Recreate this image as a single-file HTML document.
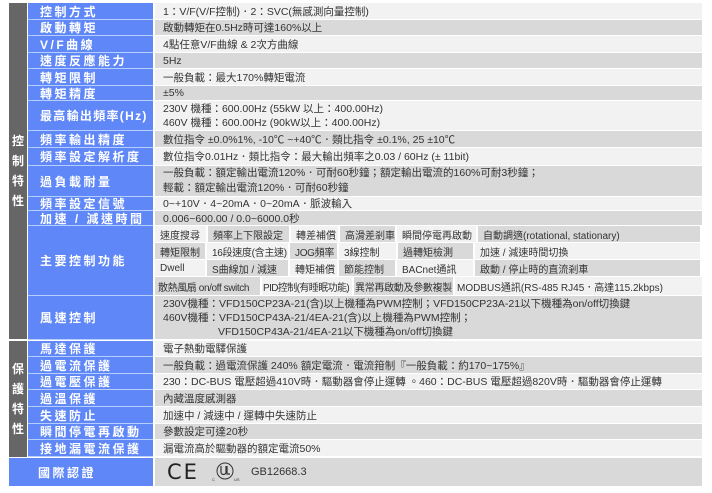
<!DOCTYPE html>
<html><head><meta charset="utf-8"><style>
*{margin:0;padding:0;box-sizing:border-box}
body{width:712px;height:493px;background:#fff;position:relative;overflow:hidden;font-family:"Liberation Sans","Noto Sans CJK TC",sans-serif}
.g{position:absolute;left:9px;width:18px;background:#666;color:#fff;font-size:12px;font-weight:bold;text-align:center;display:flex;flex-direction:column;justify-content:center;line-height:20px}
.l{position:absolute;left:28px;width:125px;background:#5f87f7;color:#fff;font-size:12px;font-weight:bold;letter-spacing:2.5px;padding-left:12px;display:flex;align-items:center;border-bottom:1px solid #b5cffa;white-space:nowrap}
.v,.c{position:absolute;font-size:10.5px;color:#333;display:flex;align-items:center;white-space:nowrap;border-bottom:1px solid #fff;overflow:hidden}
.v{left:155px;width:547px;padding-left:8px}
.c{padding-left:5px;border-right:2px solid #fff;font-size:10px}
.L{background:#f2f2f2}.D{background:#d9d9d9}
.m{flex-direction:column;align-items:flex-start;justify-content:center;line-height:14px}
</style></head><body>
<div class="g" style="top:3px;height:336px">控<br>制<br>特<br>性</div>
<div class="g" style="top:341px;height:116px">保<br>護<br>特<br>性</div>

<div class="l" style="top:3px;height:17px">控制方式</div><div class="v L" style="top:3px;height:17px">1：V/F(V/F控制)．2：SVC(無感測向量控制)</div>
<div class="l" style="top:20px;height:16px">啟動轉矩</div><div class="v D" style="top:20px;height:16px">啟動轉矩在0.5Hz時可達160%以上</div>
<div class="l" style="top:36px;height:17px">V/F曲線</div><div class="v L" style="top:36px;height:17px">4點任意V/F曲線 &amp; 2次方曲線</div>
<div class="l" style="top:53px;height:16px">速度反應能力</div><div class="v D" style="top:53px;height:16px">5Hz</div>
<div class="l" style="top:69px;height:17px">轉矩限制</div><div class="v L" style="top:69px;height:17px">一般負載：最大170%轉矩電流</div>
<div class="l" style="top:86px;height:15px">轉矩精度</div><div class="v D" style="top:86px;height:15px">±5%</div>
<div class="l" style="top:101px;height:30px;letter-spacing:1.3px">最高輸出頻率(Hz)</div><div class="v L m" style="top:101px;height:30px"><div>230V 機種：600.00Hz (55kW 以上：400.00Hz)</div><div>460V 機種：600.00Hz (90kW以上：400.00Hz)</div></div>
<div class="l" style="top:131px;height:17px">頻率輸出精度</div><div class="v D" style="top:131px;height:17px">數位指令 ±0.0%1%, -10℃ ~+40℃．類比指令 ±0.1%, 25 ±10℃</div>
<div class="l" style="top:148px;height:18px">頻率設定解析度</div><div class="v L" style="top:148px;height:18px">數位指令0.01Hz．類比指令：最大輸出頻率之0.03 / 60Hz (± 11bit)</div>
<div class="l" style="top:166px;height:31px">過負載耐量</div><div class="v D m" style="top:166px;height:31px;line-height:15px"><div>一般負載：額定輸出電流120%．可耐60秒鐘；額定輸出電流的160%可耐3秒鐘；</div><div>輕載：額定輸出電流120%．可耐60秒鐘</div></div>
<div class="l" style="top:197px;height:14px">頻率設定信號</div><div class="v L" style="top:197px;height:14px">0~+10V．4~20mA．0~20mA．脈波輸入</div>
<div class="l" style="top:211px;height:15px">加速 / 減速時間</div><div class="v D" style="top:211px;height:15px">0.006~600.00 / 0.0~6000.0秒</div>
<div class="l" style="top:226px;height:70px">主要控制功能</div>

<div class="c L" style="top:226px;left:155px;width:53px;height:17px">速度搜尋</div>
<div class="c D" style="top:226px;left:208px;width:83px;height:17px">頻率上下限設定</div>
<div class="c L" style="top:226px;left:291px;width:49px;height:17px">轉差補償</div>
<div class="c D" style="top:226px;left:340px;width:57px;height:17px">高滑差剎車</div>
<div class="c L" style="top:226px;left:397px;width:81px;height:17px">瞬間停電再啟動</div>
<div class="c D" style="top:226px;left:478px;width:224px;height:17px">自動調適(rotational, stationary)</div>

<div class="c D" style="top:243px;left:155px;width:52px;height:17px">轉矩限制</div>
<div class="c L" style="top:243px;left:207px;width:83px;height:17px;letter-spacing:-0.3px">16段速度(含主速)</div>
<div class="c D" style="top:243px;left:290px;width:49px;height:17px;letter-spacing:-0.3px">JOG頻率</div>
<div class="c L" style="top:243px;left:339px;width:59px;height:17px">3線控制</div>
<div class="c D" style="top:243px;left:398px;width:77px;height:17px">過轉矩檢測</div>
<div class="c L" style="top:243px;left:475px;width:227px;height:17px">加速 / 減速時間切換</div>

<div class="c L" style="top:260px;left:155px;width:52px;height:17px">Dwell</div>
<div class="c D" style="top:260px;left:207px;width:83px;height:17px">S曲線加 / 減速</div>
<div class="c L" style="top:260px;left:290px;width:49px;height:17px">轉矩補償</div>
<div class="c D" style="top:260px;left:339px;width:58px;height:17px">節能控制</div>
<div class="c L" style="top:260px;left:397px;width:78px;height:17px">BACnet通訊</div>
<div class="c D" style="top:260px;left:475px;width:227px;height:17px">啟動 / 停止時的直流剎車</div>

<div class="c D" style="top:277px;left:155px;width:107px;height:19px;padding-left:3px;letter-spacing:-0.4px">散熱風扇 on/off switch</div>
<div class="c L" style="top:277px;left:262px;width:92px;height:19px;padding-left:1px;letter-spacing:-0.6px">PID控制(有睡眠功能)</div>
<div class="c D" style="top:277px;left:354px;width:101px;height:19px;padding-left:1px;letter-spacing:-0.3px">異常再啟動及參數複製</div>
<div class="c L" style="top:277px;left:455px;width:247px;height:19px;padding-left:2px;border-right:0">MODBUS通訊(RS-485 RJ45．高達115.2kbps)</div>

<div class="l" style="top:296px;height:44px">風速控制</div><div class="v D m" style="top:296px;height:44px;justify-content:flex-start;padding-top:1px"><div>230V機種：VFD150CP23A-21(含)以上機種為PWM控制；VFD150CP23A-21以下機種為on/off切換鍵</div><div>460V機種：VFD150CP43A-21/4EA-21(含)以上機種為PWM控制；</div><div style="padding-left:55px">VFD150CP43A-21/4EA-21以下機種為on/off切換鍵</div></div>

<div class="l" style="top:341px;height:16px">馬達保護</div><div class="v L" style="top:341px;height:16px">電子熱動電驛保護</div>
<div class="l" style="top:357px;height:17px">過電流保護</div><div class="v D" style="top:357px;height:17px">一般負載：過電流保護 240% 額定電流．電流箝制『一般負載：約170~175%』</div>
<div class="l" style="top:374px;height:16px">過電壓保護</div><div class="v L" style="top:374px;height:16px">230：DC-BUS 電壓超過410V時．驅動器會停止運轉 。460：DC-BUS 電壓超過820V時．驅動器會停止運轉</div>
<div class="l" style="top:390px;height:17px">過溫保護</div><div class="v D" style="top:390px;height:17px">內藏溫度感測器</div>
<div class="l" style="top:407px;height:17px">失速防止</div><div class="v L" style="top:407px;height:17px">加速中 / 減速中 / 運轉中失速防止</div>
<div class="l" style="top:424px;height:16px">瞬間停電再啟動</div><div class="v D" style="top:424px;height:16px">參數設定可達20秒</div>
<div class="l" style="top:440px;height:17px">接地漏電流保護</div><div class="v L" style="top:440px;height:17px">漏電流高於驅動器的額定電流50%</div>

<div class="l" style="top:458px;left:9px;width:144px;height:28px;padding-left:29px;border:0">國際認證</div>
<div class="v D" style="top:458px;height:28px;padding-left:12px;border:0">
<span style="font-size:21px;letter-spacing:2px;color:#222;font-family:'DejaVu Sans',sans-serif">CE</span>
<svg width="30" height="22" viewBox="0 0 30 22" style="margin-left:12px"><circle cx="14" cy="10" r="8" fill="none" stroke="#333" stroke-width="1"/><path d="M10 5v6a2.5 2.5 0 0 0 5 0V5M16 5v8h3" fill="none" stroke="#333" stroke-width="1.2"/><text x="1" y="20" font-size="4" fill="#333">C</text><text x="23" y="20" font-size="4" fill="#333">US</text></svg>
<span style="margin-left:10px;font-size:11px">GB12668.3</span></div>
</body></html>
